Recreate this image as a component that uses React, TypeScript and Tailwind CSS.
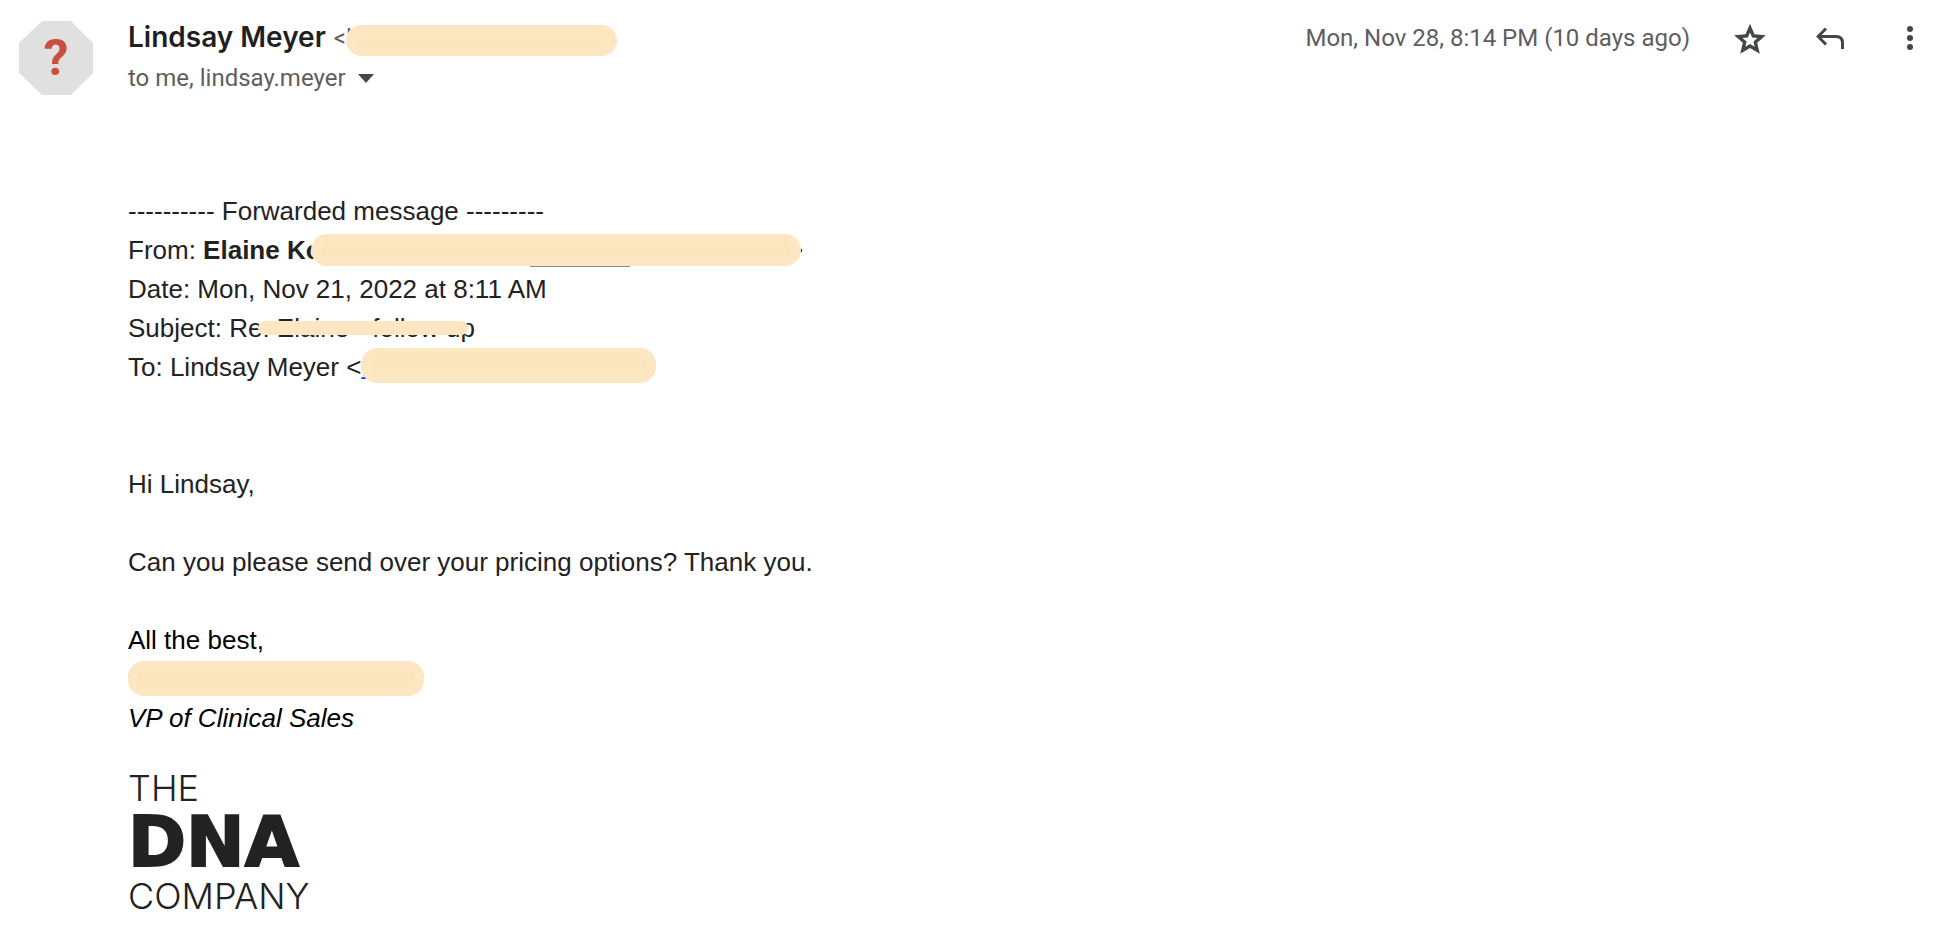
import { useState } from "react";
import type { ReactNode } from "react";

// Opaque marker stroke laid over private details. The wide strokes have a
// slightly denser core.
function Redaction({ className, core = true }: { className: string; core?: boolean }) {
  return (
    <span
      aria-hidden="true"
      className={`absolute z-10 rounded-2xl bg-[#fce7c2] ${className}`}
    >
      {core && <span className="absolute inset-[10px] rounded-md bg-[#fbe5bc]" />}
    </span>
  );
}

function Line({ children }: { children?: ReactNode }) {
  return <p className="relative h-[39px] whitespace-pre">{children}</p>;
}

function Avatar() {
  return (
    <svg viewBox="0 0 74 74" className="size-[74px] shrink-0" role="img" aria-label="Unknown sender">
      <path d="M23 0H52L74 22V52L52 74H23L0 52V22Z" fill="#e0e0e0" />
      <text
        x="37"
        y="54"
        textAnchor="middle"
        className="fill-[#cb4f3f] font-['Roboto',sans-serif] text-[50px] font-bold"
      >
        ?
      </text>
    </svg>
  );
}

function MessageHeader() {
  const [starred, setStarred] = useState(false);

  return (
    <header className="flex items-start font-['Roboto',sans-serif] text-2xl text-[#5e5e5e]">
      <Avatar />
      <div className="relative ml-[35px] min-w-0 flex-1">
        <h1 className="flex h-[34px] items-center gap-2 whitespace-nowrap">
          <span className="font-['Inter',sans-serif] text-[28px] font-semibold text-[#1f1f1f]">
            Lindsay Meyer
          </span>
          <span>&lt;l</span>
        </h1>
        <Redaction className="top-1 left-[218px] h-[31px] w-[271px]" />
        <button type="button" className="flex h-[46px] items-center gap-3 whitespace-nowrap">
          to me, lindsay.meyer
          <svg viewBox="0 0 16 9" className="h-[9px] w-4" fill="#444746">
            <path d="M0 0H16L8 9Z" />
          </svg>
        </button>
      </div>
      <div className="flex h-[34px] shrink-0 items-center whitespace-nowrap">
        <time>Mon, Nov 28, 8:14 PM (10 days ago)</time>
        <button
          type="button"
          aria-label="Star"
          aria-pressed={starred}
          onClick={() => setStarred((v) => !v)}
          className="ml-[41px]"
        >
          <svg viewBox="0 -1 24 24" className="size-[38px]" fill="#444746" fillRule="evenodd">
            <path d="M22 9.24L14.81 8.62L12 2L9.19 8.63L2 9.24L7.46 13.97L5.82 21L12 17.27L18.18 21L16.55 13.97ZM12 14.76L9.07 16.53L9.85 13.19L7.26 10.95L10.67 10.65L12 7.51L13.33 10.65L16.75 10.95L14.16 13.2L14.94 16.54Z" />
          </svg>
        </button>
        <button type="button" aria-label="Reply" className="ml-[47px]">
          <svg viewBox="0 0 28 22" className="h-[22px] w-7" fill="none" stroke="#444746" strokeWidth="3">
            <path d="M10 1.5L2.2 9.5L10 17.5M2.2 9.5H20Q26.5 9.5 26.5 16V22" />
          </svg>
        </button>
        <button type="button" aria-label="More" className="ml-[62px]">
          <svg viewBox="0 0 8 26" className="h-[26px] w-2" fill="#444746">
            <circle cx="4" cy="4" r="3" />
            <circle cx="4" cy="13" r="3" />
            <circle cx="4" cy="22" r="3" />
          </svg>
        </button>
      </div>
    </header>
  );
}

function CompanyLogo() {
  return (
    <div className="mt-7 flex flex-col text-[#222222]">
      <span className="font-['Inter',sans-serif] text-4xl leading-[44px] font-light">THE</span>
      <span className="font-['DejaVu_Sans',sans-serif] text-[70px] leading-[64px] font-bold [-webkit-text-stroke:2px_#222222]">
        DNA
      </span>
      <span className="font-['Inter',sans-serif] text-4xl leading-[44px] font-light">COMPANY</span>
    </div>
  );
}

export default function App() {
  return (
    <main className="min-h-screen bg-white pt-[21px] pr-[30px] pl-[19px]">
      <MessageHeader />
      <article className="mt-[91px] pl-[109px] font-['Liberation_Sans',Arial,sans-serif] text-[26px] leading-[39px] text-[#222222]">
        <Line>---------- Forwarded message ---------</Line>
        <Line>
          From: <strong>Elaine Ko</strong>
          <span className="absolute left-[660px]">&gt;</span>
          <Redaction className="top-[3px] left-[183px] h-8 w-[490px]" />
          <span className="absolute top-[35px] left-[402px] h-px w-[100px] rounded-full bg-[#8a8a8a]" />
        </Line>
        <Line>Date: Mon, Nov 21, 2022 at 8:11 AM</Line>
        <Line>
          Subject: Re: Elaine - follow up
          <Redaction core={false} className="top-[12px] left-[130px] h-[14px] w-[210px]" />
        </Line>
        <Line>
          To: Lindsay Meyer &lt;
          <a href="#lindsay" className="text-[#1155cc] underline decoration-2">l</a>
          <Redaction className="top-0 left-[233px] h-[35px] w-[295px]" />
        </Line>
        <Line />
        <Line />
        <Line>Hi Lindsay,</Line>
        <Line />
        <Line>Can you please send over your pricing options? Thank you.</Line>
        <Line />
        <div className="text-black">
          <Line>All the best,</Line>
          <Line>
            E
            <Redaction className="top-px left-0 h-[35px] w-[296px]" />
          </Line>
          <Line>
            <em>VP of Clinical Sales</em>
          </Line>
        </div>
        <CompanyLogo />
      </article>
    </main>
  );
}
